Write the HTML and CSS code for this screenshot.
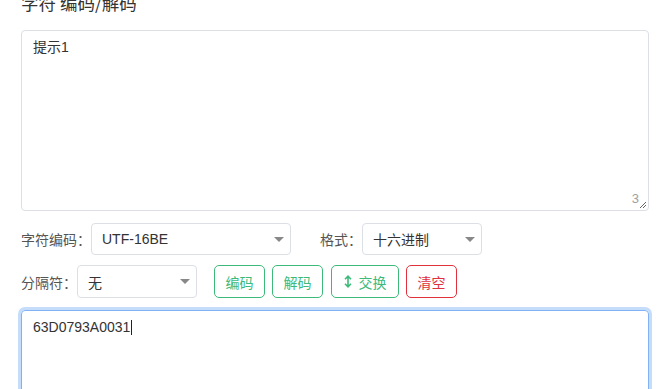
FILE: index.html
```html
<!DOCTYPE html>
<html lang="zh">
<head>
<meta charset="utf-8">
<link rel="stylesheet" href="styles.css">
</head>
<body>
<div class="page">
  <h2 class="title">字符 编码/解码</h2>
  <div class="area">
    <div class="area-text">提示1</div>
    <span class="counter">3</span>
    <svg class="grip" width="8" height="8" viewBox="0 0 8 8"><path d="M7 1L1 7M7 4L4 7" stroke="#666" stroke-width="1"/></svg>
  </div>
  <div class="row row1">
    <span class="label">字符编码：</span>
    <div class="select w200"><span>UTF-16BE</span><i class="caret"></i></div>
    <span class="label fmt">格式：</span>
    <div class="select w120"><span>十六进制</span><i class="caret"></i></div>
  </div>
  <div class="row row2">
    <span class="label">分隔符：</span>
    <div class="select w120"><span>无</span><i class="caret"></i></div>
    <div class="btns">
      <button class="btn green">编码</button>
      <button class="btn green">解码</button>
      <button class="btn green wide"><svg width="8" height="13" viewBox="0 0 8 13"><path d="M4 1.5V11.5M1 4.2L4 1.2L7 4.2M1 8.8L4 11.8L7 8.8" fill="none" stroke="#3dba7a" stroke-width="1.6"/></svg>交换</button>
      <button class="btn red">清空</button>
    </div>
  </div>
  <div class="area out">
    <div class="area-text">63D0793A0031<span class="cursor"></span></div>
  </div>
</div>
</body>
</html>
```
FILE: styles.css
```css
html, body { margin: 0; padding: 0; background: #fff; }
body { font-family: "Liberation Sans", "Noto Sans CJK SC", sans-serif; color: #333; overflow: hidden; }
.page { padding: 0 23px 0 21px; }
.title { margin: -8px 0 0 0; height: 38px; font-size: 17.5px; font-weight: normal; line-height: 22px; color: #333; font-family: "Noto Sans CJK SC", sans-serif; }
.area { position: relative; box-sizing: border-box; width: 628px; height: 181px; border: 1px solid #dcdfe6; border-radius: 4px; padding: 6px 11px; }
.area-text { font-size: 14px; line-height: 20px; color: #333; font-family: "Liberation Sans", "Noto Sans CJK SC", sans-serif; }
.counter { position: absolute; right: 9px; bottom: 4px; font-size: 13px; color: #a0a0a0; font-family: "Liberation Sans", sans-serif; }
.grip { position: absolute; right: 1px; bottom: 1px; }
.row { display: flex; align-items: center; }
.row1 { margin-top: 12px; height: 32px; }
.row2 { margin-top: 10px; height: 33px; }
.label { font-size: 14px; color: #555; font-family: "Noto Sans CJK SC", sans-serif; }
.fmt { margin-left: 29px; }
.select { box-sizing: border-box; height: 32px; border: 1px solid #dcdfe6; border-radius: 4px; display: flex; align-items: center; justify-content: space-between; padding: 0 6px 0 10px; font-size: 14px; color: #333; font-family: "Liberation Sans", "Noto Sans CJK SC", sans-serif; }
.row2 .select { height: 33px; }
.w200 { width: 200px; }
.w120 { width: 120px; }
.caret { width: 0; height: 0; border-left: 5px solid transparent; border-right: 5px solid transparent; border-top: 5px solid #888; }
.btns { display: flex; gap: 7px; margin-left: 17px; }
.btn { box-sizing: border-box; height: 33px; width: 51px; background: #fff; border-radius: 5px; font-size: 14px; font-family: "Noto Sans CJK SC", sans-serif; display: flex; align-items: center; justify-content: center; gap: 7px; padding: 0; cursor: pointer; }
.btn.wide { width: 68px; margin-left: 1px; }
.green { border: 1px solid #3dba7a; color: #3dba7a; }
.red { border: 1px solid #e0313c; color: #e0313c; }
.out { margin-top: 12px; height: 120px; border-color: #80b3f5; box-shadow: 0 0 0 3px #c5dcfb; padding-top: 6px; }
.cursor { display: inline-block; width: 1px; height: 15px; background: #222; vertical-align: -3px; margin-left: 1px; }
```
